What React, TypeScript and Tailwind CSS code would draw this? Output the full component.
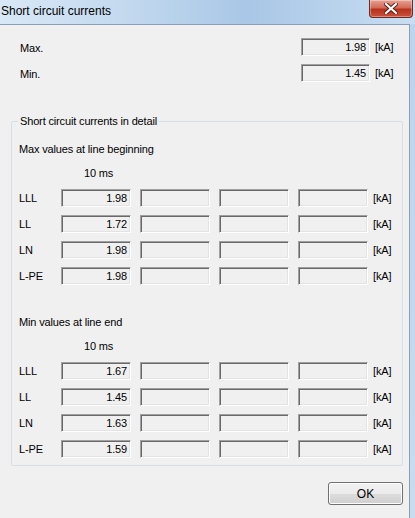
import React from "react";

const box =
  "h-[18px] bg-[#f0f0f0] border border-t-[#a0a0a0] border-l-[#a0a0a0] border-b-white border-r-white shadow-[inset_1px_1px_0_#696969,inset_-1px_-1px_0_#e3e3e3] flex items-center justify-end pr-[3px] text-[11px] leading-[14px] text-black";

function ValueBox({ v, w }: { v?: string; w: string }) {
  return <div className={`${box} ${w}`}>{v ?? ""}</div>;
}

function Row({ label, v }: { label: string; v: string }) {
  return (
    <div className="flex items-center h-[18px]">
      <div className="w-[42px] pt-[1px]">{label}</div>
      <div className="flex gap-[9px]">
        <ValueBox v={v} w="w-[70px]" />
        <ValueBox w="w-[70px]" />
        <ValueBox w="w-[70px]" />
        <ValueBox w="w-[70px]" />
      </div>
      <div className="ml-[5px] pt-[1px]">[kA]</div>
    </div>
  );
}

function Block({ title, rows, mt }: { title: string; rows: [string, string][]; mt: string }) {
  return (
    <div className={mt}>
      <div className="leading-[14px]">{title}</div>
      <div className="leading-[14px] mt-[10px] pl-[65px]">10 ms</div>
      <div className="mt-[9px] flex flex-col gap-[8px]">
        {rows.map(([l, v]) => (
          <Row key={l} label={l} v={v} />
        ))}
      </div>
    </div>
  );
}

export default function App() {
  return (
    <div
      className="w-[415px] h-[518px] flex flex-col overflow-hidden text-[11px] tracking-[-0.15px] text-black"
      style={{ fontFamily: '"Liberation Sans", Arial, sans-serif' }}
    >
      {/* Title bar */}
      <div className="h-[24px] shrink-0 flex items-start bg-[linear-gradient(90deg,#d9e8f6_0%,#c3d9ef_30%,#a9c7e6_60%,#bcd5ee_85%,#c9def2_100%)]">
        <div className="pl-[1px] pt-[3px] text-[12px] tracking-normal leading-[16px] text-black">Short circuit currents</div>
        <div className="ml-auto mr-[2px] w-[44px] h-[18px] rounded-b-[4px] border border-t-0 border-[#6d2a22] bg-[linear-gradient(180deg,#e8a293_0%,#d26b58_45%,#b8321d_55%,#c9503b_100%)] flex items-center justify-center shadow-[inset_0_0_0_1px_rgba(255,255,255,0.35)]">
          <svg width="14" height="11" viewBox="0 0 14 11">
            <path d="M2 1 L12 10 M12 1 L2 10" stroke="#5a1a12" strokeWidth="4" strokeLinecap="square" />
            <path d="M2 1 L12 10 M12 1 L2 10" stroke="#ffffff" strokeWidth="2.2" strokeLinecap="square" />
          </svg>
        </div>
      </div>
      {/* Body */}
      <div className="flex-1 flex">
        <div className="w-[410px] bg-[#f0f0f0] border-t border-r border-[#8a9fb5] flex flex-col">
          {/* Max / Min */}
          <div className="pt-[13px] flex flex-col gap-[8px]">
            {[
              ["Max.", "1.98"],
              ["Min.", "1.45"],
            ].map(([l, v]) => (
              <div key={l} className="flex items-center h-[18px]">
                <div className="pl-[20px] pt-[2px] w-[301px]">{l}</div>
                <ValueBox v={v} w="w-[69px]" />
                <div className="ml-[5px] pt-[1px]">[kA]</div>
              </div>
            ))}
          </div>
          {/* Group box */}
          <fieldset className="mt-[32px] ml-[11px] w-[392px] h-[352px] border border-[#d5dfe5] rounded-[2px] px-[7px]">
            <legend className="-ml-[1px] px-[2px] leading-[14px]">Short circuit currents in detail</legend>
            <Block
              title="Max values at line beginning"
              mt="mt-[14px]"
              rows={[
                ["LLL", "1.98"],
                ["LL", "1.72"],
                ["LN", "1.98"],
                ["L-PE", "1.98"],
              ]}
            />
            <Block
              title="Min values at line end"
              mt="mt-[30px]"
              rows={[
                ["LLL", "1.67"],
                ["LL", "1.45"],
                ["LN", "1.63"],
                ["L-PE", "1.59"],
              ]}
            />
          </fieldset>
          <div className="flex justify-end pr-[6px] mt-[16px]">
            <button className="w-[75px] h-[23px] rounded-[3px] border border-[#707070] bg-[linear-gradient(180deg,#f2f2f2_0%,#ebebeb_50%,#dddddd_51%,#cfcfcf_100%)] shadow-[inset_0_0_0_1px_#fcfcfc] text-[12px] tracking-normal leading-[14px] text-black">
              OK
            </button>
          </div>
        </div>
        <div className="flex-1 bg-[linear-gradient(180deg,#bcd4ec,#c9dcf0)]" />
      </div>
    </div>
  );
}
